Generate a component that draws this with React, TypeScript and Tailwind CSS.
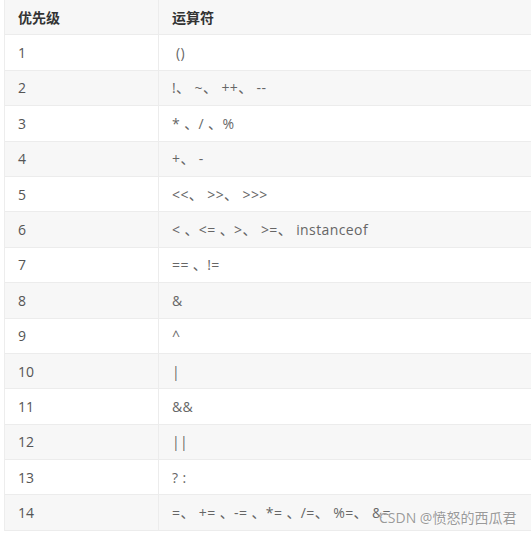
const rows: [string, string][] = [
  ["1", " ()"],
  ["2", "!、 ~、 ++、 --"],
  ["3", "* 、/ 、%"],
  ["4", "+、 -"],
  ["5", "<<、 >>、 >>>"],
  ["6", "< 、<= 、>、 >=、 instanceof"],
  ["7", "== 、!="],
  ["8", "&"],
  ["9", "^"],
  ["10", "|"],
  ["11", "&&"],
  ["12", "||"],
  ["13", "? :"],
  ["14", "=、 += 、-= 、*= 、/=、 %=、 &="],
]

export default function App() {
  return (
    <div
      className="relative w-[531px] h-[534px] overflow-hidden bg-white"
      style={{ fontFamily: '"Open Sans", "Noto Sans CJK SC", sans-serif' }}
    >
      <div className="ml-[4px] w-[560px] border-l border-[#ededed]">
        <div className="flex h-[35.4px] items-center bg-[#f7f7f7] border-b border-[#ececec] text-[14px] font-bold text-[#333]">
          <div className="w-[154px] h-full flex items-center pl-[13px] border-r border-[#ececec]">优先级</div>
          <div className="flex-1 pl-[13px]">运算符</div>
        </div>
        {rows.map(([n, op], i) => (
          <div
            key={n}
            className={
              "flex h-[35.4px] items-center border-b border-[#ececec] " +
              (i % 2 === 1 ? "bg-[#f7f7f7]" : "bg-white")
            }
          >
            <div className="w-[154px] h-full flex items-center pl-[13px] border-r border-[#ececec] text-[14px] text-[#555]">
              {n}
            </div>
            <div className="flex-1 pl-[13px] text-[14px] tracking-[0.4px] text-[#666] whitespace-pre">{op}</div>
          </div>
        ))}
      </div>
      <div
        className="absolute left-[379px] top-[507px] text-[14px] text-[#9a9a9a] whitespace-nowrap"
        style={{ textShadow: "0 0 2px #fff, 0 0 1px #fff" }}
      >
        CSDN @愤怒的西瓜君
      </div>
    </div>
  )
}
